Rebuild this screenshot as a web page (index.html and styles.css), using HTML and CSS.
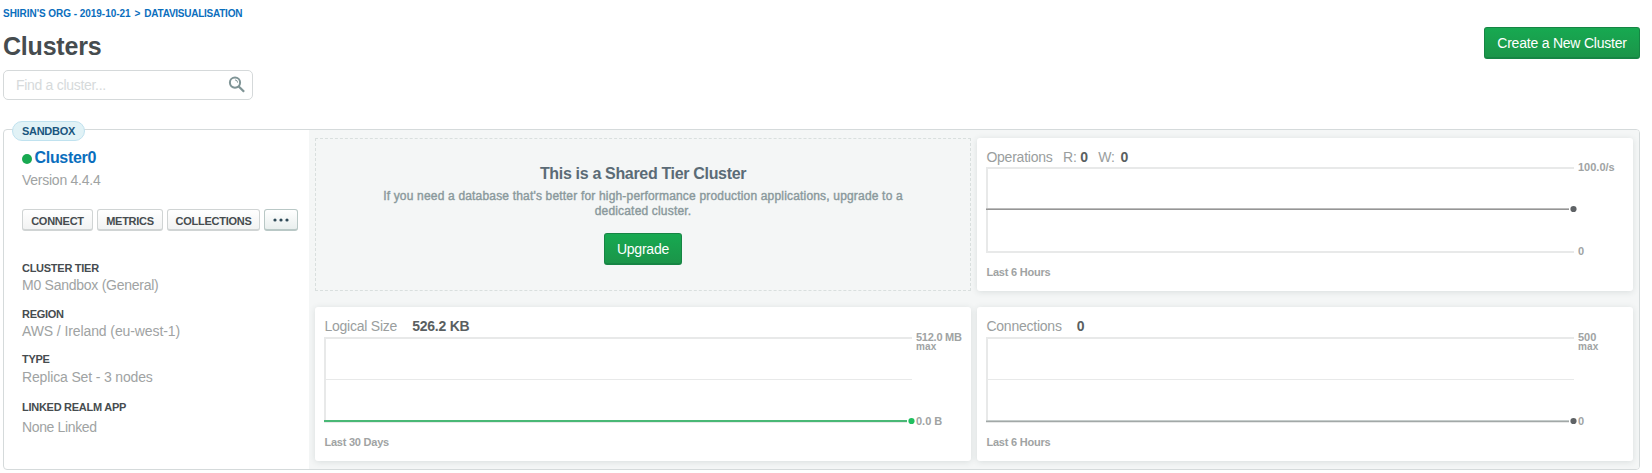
FILE: index.html
```html
<!DOCTYPE html>
<html lang="en">
<head>
<meta charset="utf-8">
<title>Clusters</title>
<link rel="stylesheet" href="styles.css">
</head>
<body>
<header class="header">
  <div class="heading">
    <nav class="crumbs"><a>SHIRIN'S ORG - 2019-10-21</a><span class="sep">&gt;</span><a class="project">DATAVISUALISATION</a></nav>
    <h1 class="title">Clusters</h1>
    <div class="search">
      <span class="placeholder">Find a cluster...</span>
      <svg class="search-icon" width="17" height="17" viewBox="0 0 17 17" fill="none" stroke="#7f9496"><circle cx="7" cy="6.6" r="5.1" stroke-width="2"/><path d="M10.5 10.2l5.6 5.6" stroke-width="2.3"/><path d="M7 3.9a2.7 2.7 0 0 1 2.6 2.7" stroke-width="1"/></svg>
    </div>
  </div>
  <button class="primary create">Create a New Cluster</button>
</header>
<main class="cluster">
  <span class="badge">SANDBOX</span>
  <section class="info">
    <h2 class="name"><i class="status"></i><span>Cluster0</span></h2>
    <p class="version">Version 4.4.4</p>
    <div class="actions">
      <button class="action connect">CONNECT</button>
      <button class="action metrics">METRICS</button>
      <button class="action collections">COLLECTIONS</button>
      <button class="action more"><svg width="16" height="4" viewBox="0 0 16 4" fill="#2f4a58"><circle cx="2" cy="2" r="1.6"/><circle cx="8" cy="2" r="1.6"/><circle cx="14" cy="2" r="1.6"/></svg></button>
    </div>
    <dl class="details">
      <dt class="tier">CLUSTER TIER</dt><dd class="tier-value">M0 Sandbox (General)</dd>
      <dt class="region">REGION</dt><dd class="region-value">AWS / Ireland (eu-west-1)</dd>
      <dt class="type">TYPE</dt><dd class="type-value">Replica Set - 3 nodes</dd>
      <dt class="realm">LINKED REALM APP</dt><dd class="realm-value">None Linked</dd>
    </dl>
  </section>
  <section class="tiles">
    <article class="upsell">
      <h3 class="upsell-title">This is a Shared Tier Cluster</h3>
      <p class="upsell-text">If you need a database that's better for high-performance production applications, upgrade to a<br>dedicated cluster.</p>
      <button class="primary upgrade">Upgrade</button>
    </article>
    <article class="tile tile-top">
      <div class="tile-head"><span>Operations</span><span class="rw">R: <b>0</b></span><span class="rw">W: <b class="writes">0</b></span></div>
      <div class="plot">
        <svg width="590" height="86" viewBox="0 0 590 86"><path d="M588 1H1V85H588" fill="none" stroke="#e8e9e9" stroke-width="2"/><path d="M0 41.5H583" stroke="#bcbcbc"/><path d="M0 42.5H583" stroke="#959595"/><circle cx="587.5" cy="42" r="3.1" fill="#5f6366"/></svg>
        <div class="scale"><span>100.0/s</span><span>0</span></div>
      </div>
      <p class="range">Last 6 Hours</p>
    </article>
    <article class="tile">
      <div class="tile-head"><span>Logical Size</span><b class="value">526.2 KB</b></div>
      <div class="plot">
        <svg width="590" height="86" viewBox="0 0 590 86"><path d="M588 1H1V85H588" fill="none" stroke="#e8e9e9" stroke-width="2"/><path d="M2 42.5H588" stroke="#e8e9e9"/><path d="M583 84H588" stroke="#fff" stroke-width="4"/><path d="M0 84H583" stroke="#49b876" stroke-width="2"/><circle cx="587.5" cy="84" r="3.1" fill="#21bf60"/></svg>
        <div class="scale"><span class="capacity">512.0 MB<small>max</small></span><span>0.0 B</span></div>
      </div>
      <p class="range">Last 30 Days</p>
    </article>
    <article class="tile">
      <div class="tile-head"><span>Connections</span><b class="value">0</b></div>
      <div class="plot">
        <svg width="590" height="86" viewBox="0 0 590 86"><path d="M588 1H1V85H588" fill="none" stroke="#e8e9e9" stroke-width="2"/><path d="M2 42.5H588" stroke="#e8e9e9"/><path d="M583 84H588" stroke="#fff" stroke-width="4"/><path d="M0 83.5H583" stroke="#c5cccb"/><path d="M0 84.5H583" stroke="#a2a8a7"/><circle cx="587.5" cy="84" r="3.1" fill="#5f6366"/></svg>
        <div class="scale"><span>500<small>max</small></span><span>0</span></div>
      </div>
      <p class="range">Last 6 Hours</p>
    </article>
  </section>
</main>
</body>
</html>
```
FILE: styles.css
```css
* { box-sizing: border-box; }
body { margin: 0; background: #fff; color: #464c4f; font-family: "Liberation Sans", Arial, sans-serif; font-size: 14px; overflow: hidden; }
h1, h2, h3, p, dl, dd { margin: 0; }
button { margin: 0; padding: 0; font-family: inherit; white-space: nowrap; }
svg { display: block; flex: none; overflow: visible; }

.header { display: flex; justify-content: space-between; align-items: flex-start; width: 1640px; height: 129px; padding: 7px 0 0 3px; }
.crumbs { display: flex; height: 13px; line-height: 13px; font-size: 10px; font-weight: 700; letter-spacing: -.04px; color: #0a6ebd; white-space: nowrap; }
.sep { margin: 0 4px 0 4px; }
.project { letter-spacing: -.25px; }
.title { margin-top: 11px; height: 30px; line-height: 30px; font-size: 25px; letter-spacing: -.2px; color: #464c4f; }
.search { display: flex; justify-content: space-between; align-items: center; width: 250px; height: 30px; margin-top: 9px; padding: 0 7px 1px 12px; border: 1px solid #d5d9da; border-radius: 5px; }
.placeholder { color: #d6dadb; letter-spacing: -.3px; }
.primary { height: 32px; border: 1px solid #168544; border-bottom-width: 2px; border-radius: 3px; background: linear-gradient(#17a951, #1b9549); color: #fff; font-size: 14px; line-height: 29px; letter-spacing: -.22px; padding-top: 1px; }
.create { width: 156px; margin-top: 20px; }

.cluster { position: relative; display: grid; grid-template-columns: 305px 1fr; width: 1637px; height: 341px; margin-left: 3px; border: 1px solid #d5dadb; border-radius: 4px; }
.badge { position: absolute; left: 8px; top: -9px; width: 73px; height: 20px; border: 1px solid #c0e2ef; border-radius: 10px; background: #e1f2f6; color: #1a567e; font-size: 11px; font-weight: 700; line-height: 18px; letter-spacing: -.3px; text-align: center; }
.info { padding: 18px 0 0 18px; }
.name { display: flex; align-items: center; height: 20px; font-size: 16px; line-height: 20px; letter-spacing: -.3px; color: #0a6ebd; }
.status { width: 10px; height: 10px; margin: 2px 2.5px 0 0; border-radius: 50%; background: #18a951; }
.version { margin-top: 4px; height: 16px; line-height: 16px; letter-spacing: -.25px; color: #a0a3a3; }
.actions { display: flex; gap: 4px; margin-top: 21px; }
.action { height: 22px; padding-top: 1px; border: 1px solid #d0d4d4; border-bottom-width: 2px; border-radius: 3px; background: linear-gradient(#fff, #f2f3f3); color: #464c4f; font-size: 11px; font-weight: 700; line-height: 21px; letter-spacing: -.25px; }
.connect { width: 71px; }
.metrics { width: 66px; }
.collections { width: 93px; }
.more { display: grid; place-items: center; width: 34px; border-color: #b9c8c6; background: linear-gradient(#fff, #e9efee); }
.details { margin-top: 30px; white-space: nowrap; }
.details dt { height: 14px; font-size: 11px; font-weight: 700; line-height: 14px; letter-spacing: -.27px; color: #464c4f; }
.details dd { height: 16px; margin-top: 2px; line-height: 16px; letter-spacing: -.26px; color: #a0a3a3; }
.details .region { margin-top: 14px; }
.details .region-value { letter-spacing: -.1px; }
.details .type { margin-top: 13px; }
.details .type-value { margin-top: 3px; letter-spacing: -.15px; }
.details .realm { margin-top: 15px; }
.details .realm-value { margin-top: 5px; letter-spacing: -.36px; }

.tiles { display: grid; grid-template-columns: 656px 656px; grid-template-rows: 153px 154px; gap: 16px 6px; padding: 8px 6px; background: #f4f6f6; border-radius: 0 3px 3px 0; }
.upsell { display: flex; flex-direction: column; align-items: center; padding-top: 25px; border: 1px dashed #d9dfde; text-align: center; }
.upsell-title { height: 20px; font-size: 16px; line-height: 20px; letter-spacing: -.33px; color: #5b6b76; }
.upsell-text { margin-top: 5px; font-size: 12px; line-height: 15px; letter-spacing: .18px; color: #8a999c; -webkit-text-stroke: .4px #8a999c; white-space: nowrap; }
.upgrade { width: 78px; margin-top: 14px; }

.tile { padding: 11px 9px 0; border-radius: 3px; background: #fff; box-shadow: 0 1px 6px rgba(40, 60, 60, .13); }
.tile-head { display: flex; align-items: baseline; height: 19px; padding-left: .4px; line-height: 17px; letter-spacing: -.23px; color: #9a9e9e; white-space: nowrap; }
.tile-top .tile-head { height: 18px; }
.tile-head b { color: #5a5f61; }
.writes { margin-left: 2px; }
.rw { margin-left: 10.5px; }
.value { margin-left: 15px; }
.plot { display: flex; height: 86px; }
.scale { display: flex; flex-direction: column; justify-content: space-between; width: 48px; height: 96px; margin: -6px 0 0 2px; font-size: 11px; font-weight: 700; line-height: 12px; color: #a0a3a3; white-space: nowrap; }
.capacity { letter-spacing: -.25px; }
.scale small { display: block; font-size: 10px; line-height: 8px; letter-spacing: .2px; }
.range { margin-top: 12px; padding-left: .4px; height: 14px; font-size: 11px; font-weight: 700; line-height: 14px; letter-spacing: -.22px; color: #a0a3a3; }
```
